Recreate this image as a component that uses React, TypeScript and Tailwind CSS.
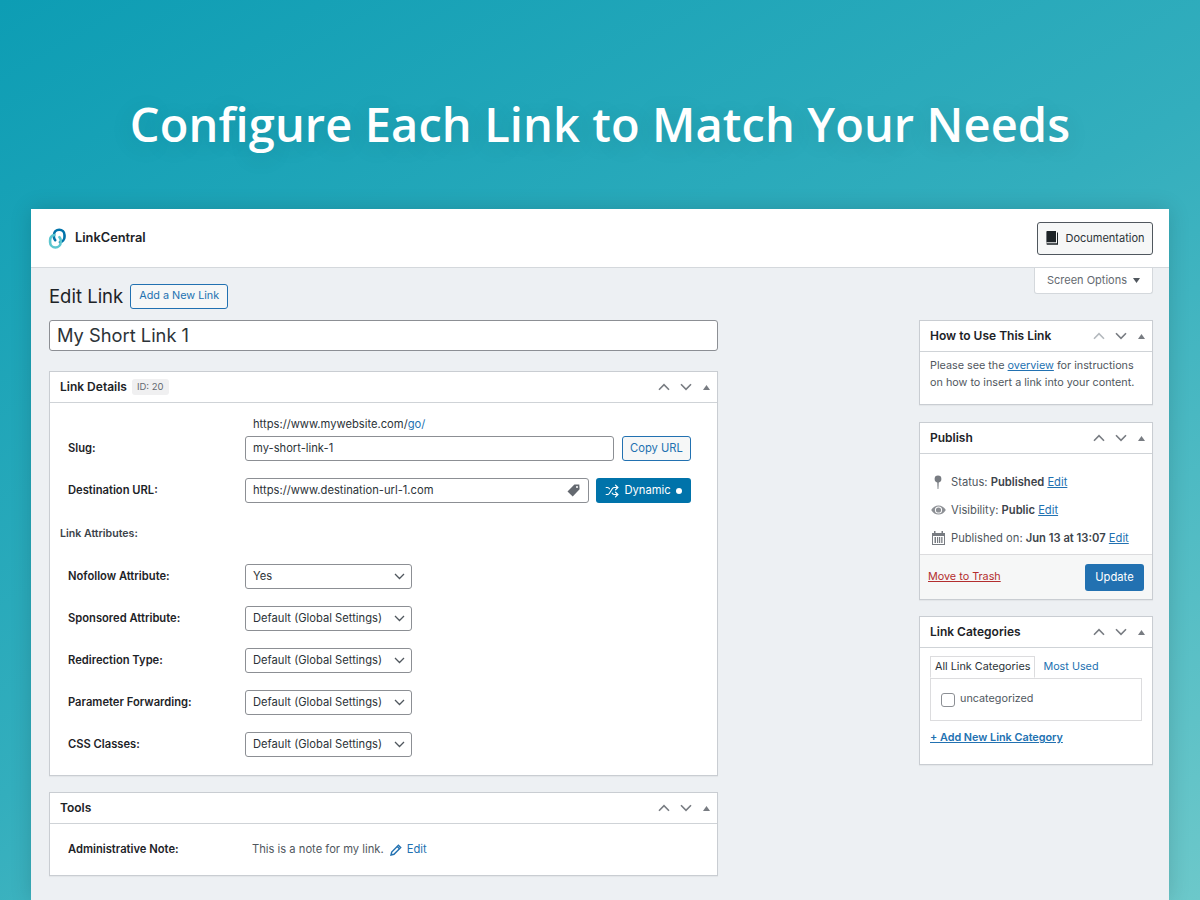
import { ArrowLeftRight, Shuffle } from 'lucide-react';
import { useState } from 'react';

// 盒子右上角的上下箭頭與收合三角形
function BoxControls({ upMuted = false }: { upMuted?: boolean }) {
  return (
    <div className="flex items-center">
      <svg width="12" height="8" viewBox="0 0 12 8" fill="none" strokeWidth="1.6" stroke={upMuted ? '#b4b9be' : '#787c82'}>
        <path d="M1 6.8 6 1.6l5 5.2" />
      </svg>
      <svg className="ml-[10px]" width="12" height="8" viewBox="0 0 12 8" fill="none" stroke="#787c82" strokeWidth="1.6">
        <path d="M1 1.2 6 6.4l5-5.2" />
      </svg>
      <svg className="ml-[11px]" width="7" height="5" viewBox="0 0 7 5" fill="#787c82">
        <path d="M3.5 0 7 5H0z" />
      </svg>
    </div>
  );
}

function Box({ title, extra, upMuted, className, children }: { title: string; extra?: React.ReactNode; upMuted?: boolean; className?: string; children: React.ReactNode }) {
  return (
    <section className={`border border-[#c9cdd2] bg-white shadow-[0_1px_1px_rgba(0,0,0,0.04)] ${className ?? ''}`}>
      <div className="flex h-[31px] items-center justify-between border-b border-[#cfd3d7] pl-[10px] pr-[7px]">
        <div className="flex items-center">
          <h2 className="text-[12px] font-semibold text-[#1d2327]">{title}</h2>
          {extra}
        </div>
        <BoxControls upMuted={upMuted} />
      </div>
      {children}
    </section>
  );
}

function SelectRow({ label, value }: { label: string; value: string }) {
  return (
    <div className="flex h-[25px] items-center">
      <div className="w-[185px] pl-[8px] text-[11.2px] font-semibold text-[#1d2327]">{label}</div>
      <div className="flex h-[25px] w-[167px] items-center justify-between rounded-[3px] border border-[#8c8f94] bg-white pl-[7px] pr-[6px] text-[11.2px] text-[#2c3338]">
        <span>{value}</span>
        <svg width="11" height="7" viewBox="0 0 11 7" fill="none" stroke="#50575e" strokeWidth="1.3">
          <path d="M1 1l4.5 4.5L10 1" />
        </svg>
      </div>
    </div>
  );
}

function MetaRow({ icon, children }: { icon: React.ReactNode; children: React.ReactNode }) {
  return (
    <div className="flex h-[28px] items-center text-[11.2px] text-[#50575e]">
      <div className="flex w-[20px] justify-center">{icon}</div>
      <div className="ml-[3px] whitespace-nowrap">{children}</div>
    </div>
  );
}

const editLink = 'font-normal text-[#2271b1] underline';

export default function App() {
  const [checked, setChecked] = useState(false);

  return (
    <div className="flex h-[900px] w-[1200px] flex-col overflow-hidden bg-[linear-gradient(150deg,#0d9db4_0%,#33aebd_50%,#6cc8ca_100%)] font-['Inter',sans-serif]">
      <div className="flex h-[209px] shrink-0 items-start justify-center pt-[88px]">
        <h1 className="font-['Open_Sans',sans-serif] text-[47px] font-semibold leading-[72px] tracking-[0.1px] text-white [text-shadow:0_4px_24px_rgba(0,0,0,0.12)]">
          Configure Each Link to Match Your Needs
        </h1>
      </div>

      <div className="mx-[31px] flex-1 bg-[#edf0f3] shadow-[0_0_20px_rgba(0,0,0,0.15)]">
        {/* 頂部列 */}
        <header className="flex h-[59px] items-center justify-between border-b border-[#d4d8dc] bg-white pl-[16px] pr-[16px]">
          <div className="flex items-center">
            <svg width="21" height="21" viewBox="0 0 21 21" fill="none" strokeWidth="2.6" strokeLinecap="round">
              <path d="M8.2 12.2c-.9-1-1.3-2-1.3-3.2V7a5.3 5.3 0 0 1 10.6 0v2a5.3 5.3 0 0 1-4.6 5.2" stroke="#0073aa" />
              <path d="M12.4 9.2c.9 1 1.3 2 1.3 3v2a5.3 5.3 0 0 1-10.6 0v-2A5.3 5.3 0 0 1 7.4 7" stroke="#5cc6cf" />
            </svg>
            <span className="ml-[7px] text-[12.8px] font-semibold text-[#1d2327]">LinkCentral</span>
          </div>
          <button className="flex h-[33px] w-[116px] items-center justify-center rounded-[3px] border border-[#50575e] bg-[#f6f7f7] text-[11px] text-[#2c3338]">
            <svg width="14" height="15" viewBox="0 0 14 15" fill="#1d2327">
              <path d="M2.4 0H11v11.2H2.6c-.8 0-1.2.4-1.2 1V1C1.4.4 1.8 0 2.4 0z" />
              <path d="M1.4 12.4c0 .9.5 1.4 1.3 1.4H13V1.6h-1v10.6H2.6c-.8 0-1.2.1-1.2.2z" />
            </svg>
            <span className="ml-[6px]">Documentation</span>
          </button>
        </header>

        <div className="pl-[18px] pr-[16px]">
          <div className="flex items-start justify-between">
            <div className="flex items-center pt-[16px]">
              <h1 className="text-[18.5px] leading-[25px] text-[#1d2327]">Edit Link</h1>
              <button className="ml-[7px] flex h-[25px] w-[98px] items-center justify-center rounded-[3px] border border-[#2271b1] bg-[#f6f7f7] text-[10.8px] text-[#2271b1]">
                Add a New Link
              </button>
            </div>
            <button className="flex h-[26px] w-[119px] items-center justify-center rounded-b-[3px] border border-t-0 border-[#d4d8dc] bg-white text-[11px] text-[#646970]">
              Screen Options
              <svg className="ml-[6px]" width="7" height="5" viewBox="0 0 7 5" fill="#50575e">
                <path d="M0 0h7L3.5 5z" />
              </svg>
            </button>
          </div>

          <div className="mt-[11px] flex items-start justify-between">
            {/* 左欄 */}
            <div className="w-[669px]">
              <div className="flex h-[31px] items-center rounded-[3px] border border-[#8c8f94] bg-white px-[7px] text-[18.3px] text-[#2c3338]">
                My Short Link 1
              </div>

              <Box
                title="Link Details"
                className="mt-[20px]"
                extra={<span className="ml-[5px] rounded-[3px] bg-[#f0f0f1] px-[5px] py-[1px] text-[9.5px] text-[#646970]">ID: 20</span>}
              >
                <div className="pl-[10px] pr-[18px]">
                  <div className="pt-[14px] text-[11.2px] leading-[15px]">
                    <div className="pl-[193px] text-[#2c3338]">
                      https://www.mywebsite.com/<span className="text-[#2271b1]">go/</span>
                    </div>
                    <div className="mt-[4px] flex h-[25px] items-center">
                      <div className="w-[185px] pl-[8px] font-semibold text-[#1d2327]">Slug:</div>
                      <div className="flex h-[25px] w-[369px] items-center rounded-[3px] border border-[#8c8f94] bg-white px-[7px] text-[#2c3338]">my-short-link-1</div>
                      <button className="ml-[8px] flex h-[25px] w-[69px] items-center justify-center rounded-[3px] border border-[#2271b1] bg-[#f6f7f7] text-[#2271b1]">Copy URL</button>
                    </div>
                  </div>
                  <div className="mt-[17px] flex h-[25px] items-center text-[11.2px]">
                    <div className="w-[185px] pl-[8px] font-semibold text-[#1d2327]">Destination URL:</div>
                    <div className="flex h-[25px] w-[344px] items-center justify-between rounded-[3px] border border-[#8c8f94] bg-white pl-[7px] pr-[8px] text-[#2c3338]">
                      <span>https://www.destination-url-1.com</span>
                      <svg width="13" height="13" viewBox="0 0 13 13" fill="#646970">
                        <path fillRule="evenodd" d="M7.4.6 12.3.4l.3 4.9-6.9 7.2L.5 7.6zM10 2a1 1 0 1 0 .01 2A1 1 0 0 0 10 2z" />
                      </svg>
                    </div>
                    <button className="ml-[7px] flex h-[25px] w-[95px] items-center justify-center rounded-[3px] bg-[#0073aa] text-white">
                      <Shuffle size={14} strokeWidth={2} />
                      <span className="ml-[5px]">Dynamic</span>
                      <span className="ml-[5px] h-[6px] w-[6px] rounded-full bg-white" />
                    </button>
                  </div>
                  <div className="mt-[24px] text-[10.6px] font-semibold leading-[14px] text-[#3c434a]">Link Attributes:</div>
                  <div className="mt-[23px] flex flex-col gap-[17px] pb-[18px]">
                    <SelectRow label="Nofollow Attribute:" value="Yes" />
                    <SelectRow label="Sponsored Attribute:" value="Default (Global Settings)" />
                    <SelectRow label="Redirection Type:" value="Default (Global Settings)" />
                    <SelectRow label="Parameter Forwarding:" value="Default (Global Settings)" />
                    <SelectRow label="CSS Classes:" value="Default (Global Settings)" />
                  </div>
                </div>
              </Box>

              <Box title="Tools" className="mt-[16px]">
                <div className="flex h-[51px] items-center pl-[18px] text-[11.2px]">
                  <div className="w-[184px] font-semibold text-[#1d2327]">Administrative Note:</div>
                  <span className="text-[#50575e]">This is a note for my link.</span>
                  <svg className="ml-[6px]" width="12" height="12" viewBox="0 0 12 12" fill="none" stroke="#2271b1" strokeWidth="1.4">
                    <path d="M1 11l.7-3L8.4 1.3l2.3 2.3L4 10.3z" />
                    <path d="M7.2 2.5l2.3 2.3" />
                  </svg>
                  <a className="ml-[5px] text-[#2271b1]">Edit</a>
                </div>
              </Box>
            </div>

            {/* 右欄 */}
            <div className="w-[234px]">
              <Box title="How to Use This Link" upMuted>
                <p className="h-[52px] px-[10px] pt-[5px] text-[10.8px] leading-[17px] text-[#50575e]">
                  Please see the <a className="text-[#2271b1] underline">overview</a> for instructions on how to insert a link into your content.
                </p>
              </Box>

              <Box title="Publish" className="mt-[17px]">
                <div className="pl-[8px] pt-[14px] pb-[2px]">
                  <MetaRow
                    icon={
                      <svg width="8" height="14" viewBox="0 0 8 14" fill="#787c82">
                        <circle cx="4" cy="4" r="3.4" />
                        <path d="M3.2 6h1.6L4.4 14h-.8z" />
                      </svg>
                    }
                  >
                    Status: <b className="font-semibold text-[#3c434a]">Published</b> <a className={editLink}>Edit</a>
                  </MetaRow>
                  <MetaRow
                    icon={
                      <svg width="15" height="10" viewBox="0 0 15 10">
                        <path d="M.2 5C2 2 4.500.4 7.500.4S13 2 14.800 5C13 8 10.500 9.600 7.500 9.600S2 8 .2 5z" fill="#8c8f94" />
                        <circle cx="7.500" cy="5" r="3.600" fill="#fff" />
                        <circle cx="7.500" cy="5" r="2.600" fill="#8c8f94" />
                      </svg>
                    }
                  >
                    Visibility: <b className="font-semibold text-[#3c434a]">Public</b> <a className={editLink}>Edit</a>
                  </MetaRow>
                  <MetaRow
                    icon={
                      <svg width="13" height="14" viewBox="0 0 13 14" fill="#787c82">
                        <path fillRule="evenodd" d="M0 2h2V0h1.500v2h6V0H11v2h2v12H0zm1 3v8h11V5z" />
                        <path d="M2.500 6h1.500v6H2.500zM5 6h1.200v6H5zM7 6h1.200v6H7zM9.200 6h1.300v6H9.200z" />
                      </svg>
                    }
                  >
                    Published on: <b className="font-semibold text-[#3c434a]">Jun 13 at 13:07</b> <a className={editLink}>Edit</a>
                  </MetaRow>
                </div>
                <div className="flex h-[45px] items-center justify-between border-t border-[#dcdcde] bg-[#f6f7f7] pl-[8px] pr-[8px]">
                  <a className="text-[10.8px] text-[#b32d2e] underline">Move to Trash</a>
                  <button className="flex h-[27px] w-[59px] items-center justify-center rounded-[3px] bg-[#2271b1] text-[11.2px] text-white">Update</button>
                </div>
              </Box>

              <Box title="Link Categories" className="mt-[16px]">
                <div className="px-[10px] pt-[8px] pb-[19px]">
                  <div className="flex text-[10.8px]">
                    <div className="relative z-10 -mb-px flex h-[22px] items-center border border-b-white border-[#dcdcde] bg-white px-[4px] text-[#2c3338]">All Link Categories</div>
                    <div className="flex h-[22px] items-center pl-[8px] text-[#2271b1]">Most Used</div>
                  </div>
                  <div className="flex h-[43px] w-[212px] items-center border border-[#dcdcde] pl-[10px] text-[10.8px] text-[#50575e]">
                    <button
                      onClick={() => setChecked(!checked)}
                      className="h-[14px] w-[14px] rounded-[3px] border border-[#8c8f94] bg-white"
                    />
                    <span className="ml-[5px]">uncategorized</span>
                  </div>
                  <a className="mt-[9px] block text-[10.8px] font-semibold leading-[15px] text-[#2271b1] underline">+ Add New Link Category</a>
                </div>
              </Box>
            </div>
          </div>
        </div>
      </div>
    </div>
  );
}
